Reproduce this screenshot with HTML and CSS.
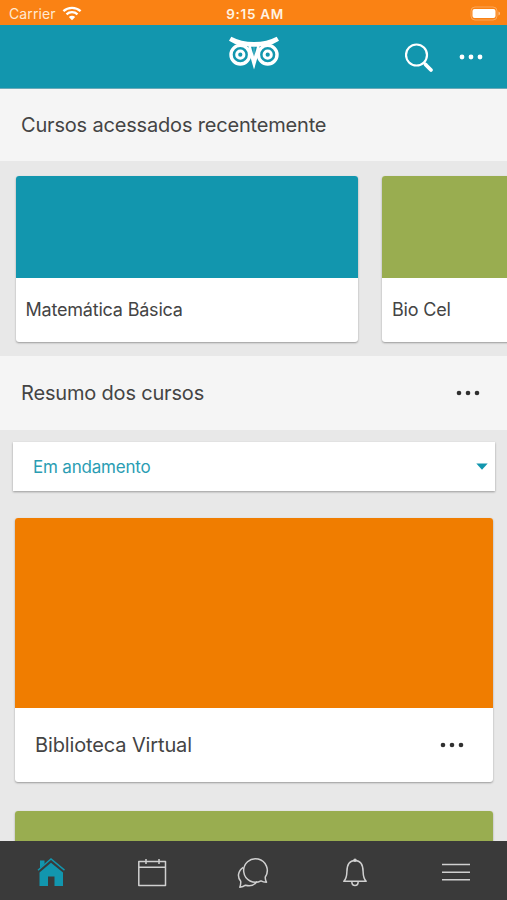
FILE: index.html
```html
<!DOCTYPE html>
<html lang="pt-BR">
<head>
<meta charset="utf-8">
<title>Cursos</title>
<link rel="stylesheet" href="styles.css">
</head>
<body>
<div class="status">
  <div class="carrier"><span>Carrier</span>
    <svg width="20" height="15" viewBox="0 0 20 15" fill="none" stroke="#fff" stroke-width="2.3"><path d="M1.4 5.2C6.2.7 13.8.7 18.6 5.2M4.5 8.3c3.1-2.9 7.9-2.9 11 0"/><path d="M10 14.2 6.8 11c1.8-1.7 4.6-1.7 6.4 0z" fill="#fff" stroke="none"/></svg>
  </div>
  <span class="time">9:15 AM</span>
  <svg class="battery" width="31" height="16" viewBox="0 0 31 16"><rect x="1" y="1" width="26" height="13" rx="4" fill="none" stroke="#fff" stroke-opacity=".3"/><rect x="2.500" y="3" width="23" height="9" rx="2" fill="#fff"/><path d="M28.500 5.500v4q1.500-.6 1.500-2t-1.500-2" fill="#fff" fill-opacity=".5"/></svg>
</div>
<header class="header">
  <svg class="owl" width="52" height="34" viewBox="0 0 52 34">
    <circle cx="12.300" cy="18.700" r="9.300" fill="#1296ae" stroke="#fff" stroke-width="3.400"/>
    <circle cx="39.700" cy="18.700" r="9.300" fill="#1296ae" stroke="#fff" stroke-width="3.400"/>
    <path d="M3.300.8Q13 6 26 6T48.700.8L51 4.800Q46 7.800 40 10H12Q6 7.800 1 4.800Z" fill="#fff"/>
    <path d="M20 9h12Q29.800 22 26 33.500Q22.200 22 20 9Z" fill="#fff"/>
    <circle cx="12.300" cy="18.700" r="3.600" fill="#1296ae" stroke="#fff" stroke-width="3"/>
    <circle cx="39.700" cy="18.700" r="3.600" fill="#1296ae" stroke="#fff" stroke-width="3"/>
    <path d="M23 10.800h6Q28 15 26 20.500Q24 15 23 10.800Z" fill="#1296ae"/>
    <path d="M26 11v9" stroke="#fff" stroke-opacity=".35"/>
  </svg>
  <svg class="search" width="30" height="30" viewBox="0 0 30 30" fill="none" stroke="#fff"><circle cx="11.500" cy="12" r="10.500" stroke-width="2.200"/><path d="m18.500 19 2.500 2.500" stroke-width="2"/><path d="m20.500 21.500 5.500 5.500" stroke-width="3.800" stroke-linecap="round"/></svg>
  <svg class="dots light" width="24" height="6" viewBox="0 0 24 6"><circle cx="3" cy="3" r="2.400"/><circle cx="12" cy="3" r="2.400"/><circle cx="21" cy="3" r="2.400"/></svg>
</header>
<main class="content">
  <section class="title recent"><h2>Cursos acessados recentemente</h2></section>
  <div class="carousel">
    <article class="card small"><div class="cover blue"></div><p>Matemática Básica</p></article>
    <article class="card small"><div class="cover green"></div><p>Bio Cel</p></article>
  </div>
  <section class="title summary"><h2>Resumo dos cursos</h2>
    <svg class="dots" width="24" height="6" viewBox="0 0 24 6"><circle cx="3" cy="3" r="2.300"/><circle cx="12" cy="3" r="2.300"/><circle cx="21" cy="3" r="2.300"/></svg>
  </section>
  <div class="select"><span>Em andamento</span><svg width="12" height="7" viewBox="0 0 12 7"><path d="M.3.500h11.400L6 6.800z" fill="#1296ae"/></svg></div>
  <article class="card large"><div class="cover orange"></div>
    <div class="row"><p>Biblioteca Virtual</p>
      <svg class="dots" width="24" height="6" viewBox="0 0 24 6"><circle cx="3" cy="3" r="2.300"/><circle cx="12" cy="3" r="2.300"/><circle cx="21" cy="3" r="2.300"/></svg>
    </div>
  </article>
  <article class="card large"><div class="cover green"></div></article>
</main>
<nav class="tabs">
  <a><svg width="32" height="32" viewBox="0 0 32 32"><path d="M4.500 16.500 16 6.800l12 9.700V30h-8.500v-9.500h-6.500V30H4.500z" fill="#1296ae"/><path d="M5 4.500h4.500V8L5 12z" fill="#1296ae"/><path d="M3 14.200 16 3l13.500 11.200" fill="none" stroke="#1296ae" stroke-width="1.500"/></svg></a>
  <a><svg width="32" height="32" viewBox="0 0 32 32" class="line"><path d="M2.800 5.500h26.700v24H2.800zM2.800 11.300h26.700M10 3v5M23 3v5"/></svg></a>
  <a><svg width="32" height="32" viewBox="0 0 32 32" class="line"><path d="M29.500 26.200c-2.200 0-4.200-.5-5.500-1.300A11.800 11.800 0 1 1 28.300 21c-.2 2 .3 3.700 1.200 5.200z"/><path d="M6.300 11.300C.8 15 .1 21 3.700 25.300c.2 2-.1 3.900-.9 5.900 2.200-.1 4.200-.8 5.700-2 4.800 1.300 9.200-.6 11.400-3.700"/></svg></a>
  <a><svg width="32" height="32" viewBox="0 0 32 32" class="line"><path d="M4.800 25.200h22.400c-2.600-2.300-3-5.200-3.100-9.700C24 8.300 21.500 4.500 16 4.500S8 8.300 7.900 15.500c-.1 4.500-.5 7.400-3.100 9.700zM12.800 25.600c.2 5.200 6.200 5.200 6.400 0"/><circle cx="16" cy="4.300" r="1" fill="#fff"/></svg></a>
  <a><svg width="32" height="32" viewBox="0 0 32 32" class="line"><path d="M2 8.500h28M2 16.200h28M2 23.700h28"/></svg></a>
</nav>
</body>
</html>
```
FILE: styles.css
```css
* { box-sizing: border-box; }
body {
  margin: 0;
  height: 900px;
  overflow: hidden;
  display: flex;
  flex-direction: column;
  background: #e8e8e8;
  color: #444;
  font-family: Inter, "Liberation Sans", sans-serif;
}
h2, p { margin: 0; font-weight: 400; white-space: nowrap; }
svg { display: block; flex: none; }

.status {
  flex: none;
  height: 25px;
  display: grid;
  grid-template-columns: 1fr auto 1fr;
  align-items: center;
  padding: 2px 6px 0 9px;
  background: #fa8214;
  color: #fff;
  font-size: 14px;
}
.carrier { display: flex; align-items: center; gap: 6px; color: #ffe9d2; letter-spacing: .1px; }
.time { font-weight: 600; font-size: 13.5px; letter-spacing: .7px; color: #fff3e2; }
.battery { justify-self: end; }

.header {
  flex: none;
  height: 64px;
  display: grid;
  grid-template-columns: 228px 52px 1fr 30px 24px 24px;
  align-items: center;
  padding-right: 24px;
  background: #1296ae;
  border-bottom: 1px solid #6aa9b8;
}
.owl { grid-column: 2; margin-bottom: 8px; }
.search { grid-column: 4; margin-top: 2px; }
.header .dots { grid-column: 6; margin-top: 1px; }
.dots { fill: #303030; }
.dots.light { fill: #fff; }

.content { flex: 1; min-height: 0; overflow: hidden; }
.title {
  display: flex;
  align-items: center;
  justify-content: space-between;
  padding: 0 27px 0 21px;
  background: #f5f5f5;
}
.title h2 { font-size: 20px; line-height: 26px; letter-spacing: -.18px; }
.recent { height: 72px; }
.summary { height: 74px; }

.carousel { display: flex; gap: 24px; height: 195px; padding: 15px 0 0 15.5px; overflow: hidden; }
.card { background: #fff; border-radius: 3px; overflow: hidden; box-shadow: 0 1px 2px rgba(0, 0, 0, .34); }
.small { flex: none; width: 342.5px; height: 166px; }
.small .cover { height: 102px; }
.small p { padding: 19px 10px; font-size: 18px; line-height: 26px; letter-spacing: -.2px; }
.blue { background: #1296ae; }
.green { background: #99ad50; }
.orange { background: #f07d00; }

.select {
  display: flex;
  align-items: center;
  justify-content: space-between;
  height: 49px;
  margin: 12px 12px 27px 13px;
  padding: 0 7px 0 20px;
  background: #fff;
  box-shadow: 0 1px 2px rgba(0, 0, 0, .34);
  color: #2a9db3;
  font-size: 17px;
  letter-spacing: -.2px;
}
.large { height: 264px; margin: 0 14.5px 29px 15px; }
.large .cover { height: 190px; }
.row { display: flex; align-items: center; justify-content: space-between; height: 74px; padding: 0 29px 0 20px; }
.row p { font-size: 20px; letter-spacing: -.13px; }

.tabs { flex: none; height: 59px; display: grid; grid-template-columns: repeat(5, 1fr); background: #3a3a3a; }
.tabs a { display: flex; align-items: center; justify-content: center; padding-top: 3px; }
.line { fill: none; stroke: #d0d0d0; stroke-width: 1.5; stroke-linejoin: round; }
```
